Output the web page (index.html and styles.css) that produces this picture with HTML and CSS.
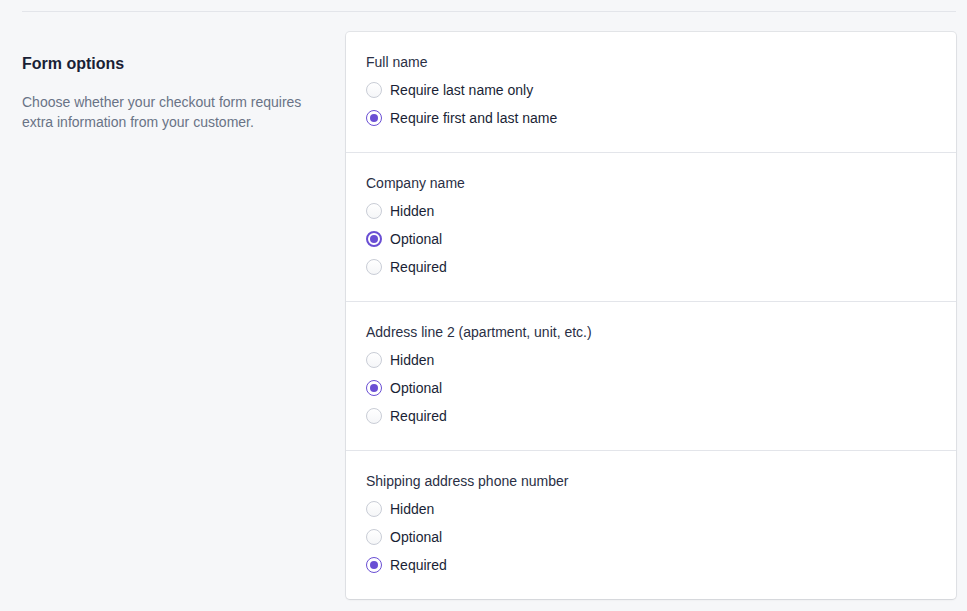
FILE: index.html
```html
<!DOCTYPE html>
<html>
<head>
<meta charset="utf-8">
<link rel="stylesheet" href="styles.css">
</head>
<body>
<div class="page">
  <div class="settings">
    <div class="intro">
      <h2 class="title">Form options</h2>
      <p class="desc">Choose whether your checkout form requires extra information from your customer.</p>
    </div>
    <div class="card">
      <div class="group">
        <div class="label">Full name</div>
        <div class="opt"><span class="radio"></span>Require last name only</div>
        <div class="opt"><span class="radio checked"></span>Require first and last name</div>
      </div>
      <div class="group">
        <div class="label">Company name</div>
        <div class="opt"><span class="radio"></span>Hidden</div>
        <div class="opt"><span class="radio checked focus"></span>Optional</div>
        <div class="opt"><span class="radio"></span>Required</div>
      </div>
      <div class="group">
        <div class="label">Address line 2 (apartment, unit, etc.)</div>
        <div class="opt"><span class="radio"></span>Hidden</div>
        <div class="opt"><span class="radio checked"></span>Optional</div>
        <div class="opt"><span class="radio"></span>Required</div>
      </div>
      <div class="group">
        <div class="label">Shipping address phone number</div>
        <div class="opt"><span class="radio"></span>Hidden</div>
        <div class="opt"><span class="radio"></span>Optional</div>
        <div class="opt"><span class="radio checked"></span>Required</div>
      </div>
    </div>
  </div>
</div>
</body>
</html>
```

FILE: styles.css
```css
* { box-sizing: border-box; }
html, body { margin: 0; padding: 0; }
body {
  background: #f6f7f9;
  font-family: "Liberation Sans", Arial, sans-serif;
  font-size: 14px;
  line-height: 20px;
  color: #1a1f36;
  width: 967px;
  height: 611px;
  overflow: hidden;
}
.page {
  padding: 11px 11px 0 22px;
}
.settings {
  border-top: 1px solid #e3e5ea;
  padding-top: 20px;
  display: flex;
}
.intro {
  width: 324px;
  padding-top: 22px;
  padding-right: 30px;
}
.title {
  margin: 0 0 18px;
  font-size: 16px;
  line-height: 20px;
  font-weight: bold;
  color: #1a1f36;
}
.desc {
  margin: 0;
  color: #697386;
  font-size: 14px;
  line-height: 20px;
}
.card {
  width: 610px;
  background: #fff;
  border-radius: 4px;
  box-shadow: 0 0 0 1px rgba(60, 66, 87, 0.1), 0 1px 2px rgba(0, 0, 0, 0.08);
}
.group {
  padding: 20px 20px 20px;
  border-top: 1px solid #e3e5ea;
}
.group:first-child {
  border-top: 0;
  padding-top: 20px;
}
.label {
  color: #2a2f45;
  margin-bottom: 4px;
}
.opt {
  height: 28px;
  display: flex;
  align-items: center;
  color: #1a1f36;
}
.radio {
  width: 16px;
  height: 16px;
  border-radius: 50%;
  border: 1px solid #c9cdd6;
  background: linear-gradient(#fff, #f5f6f8);
  margin-right: 8px;
  flex: none;
  display: flex;
  align-items: center;
  justify-content: center;
}
.radio.checked {
  border: 1px solid #6a4fd4;
  background: #fff;
}
.radio.checked::after {
  content: "";
  width: 8px;
  height: 8px;
  border-radius: 50%;
  background: #6a4fd4;
}
.radio.focus {
  border: 2px solid #6a4fd4;
}
```
